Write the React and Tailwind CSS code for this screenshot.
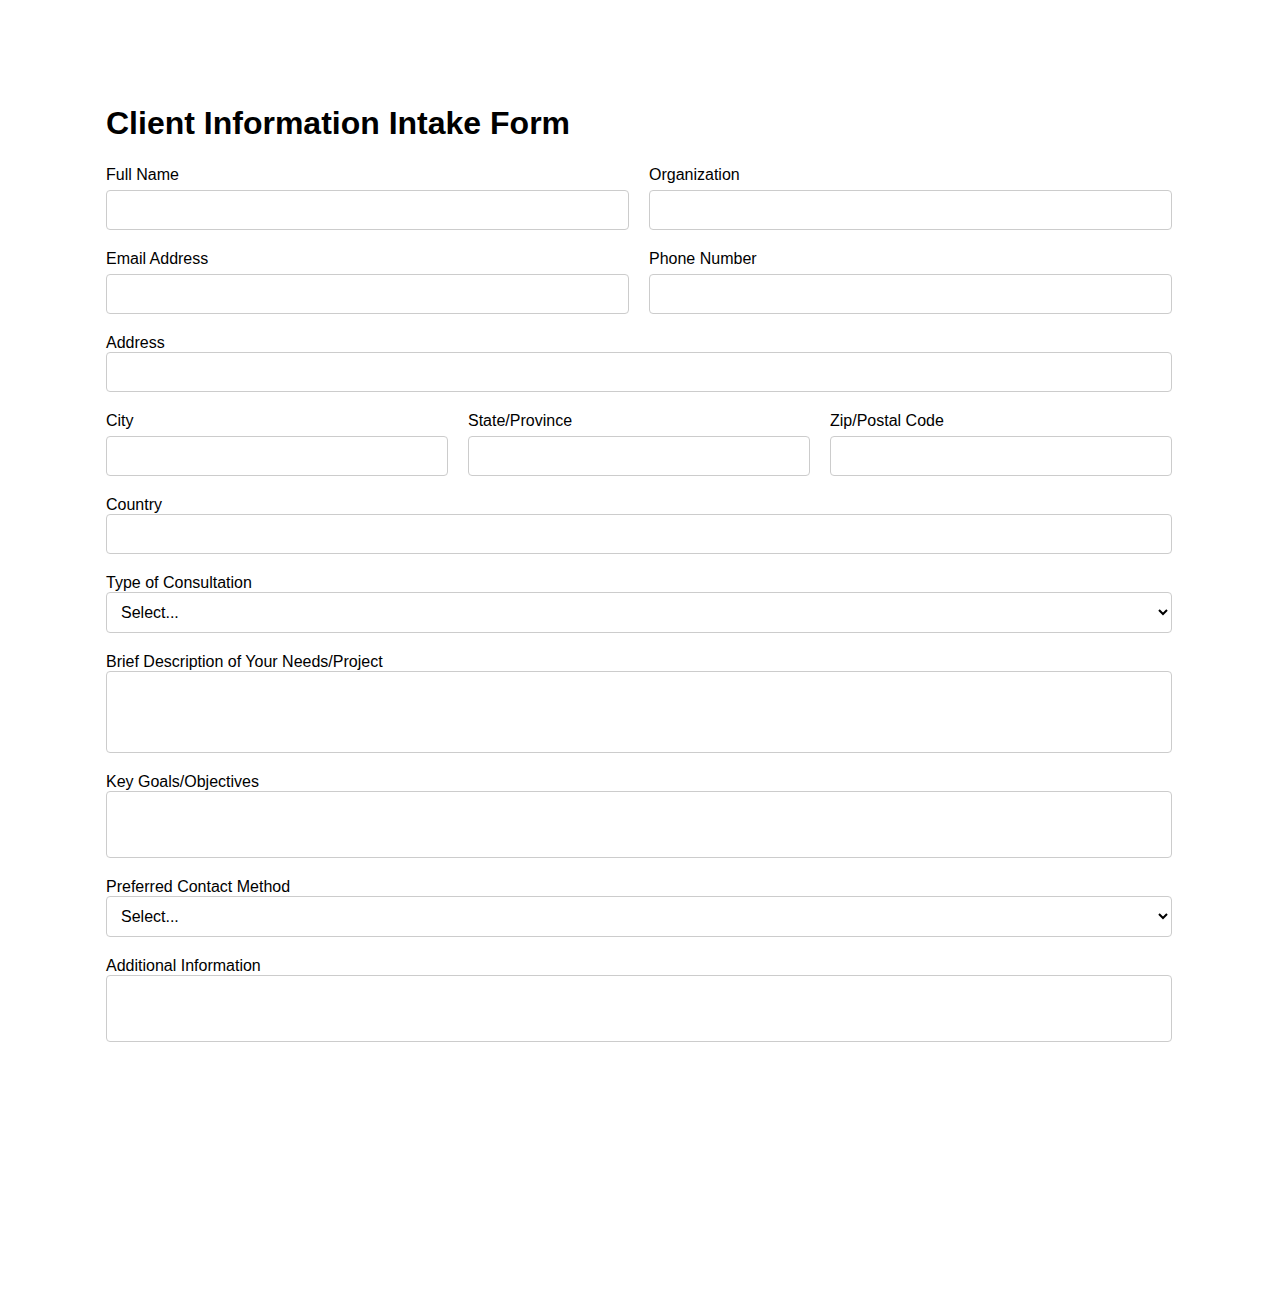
import React from "react";

const font = { fontFamily: '"Liberation Sans", Arial, sans-serif' };

const inputCls =
  "block w-full h-[40px] px-[10px] border border-[#cccccc] rounded-[4px] text-base bg-white outline-none";

const areaCls =
  "block w-full p-[10px] border border-[#cccccc] rounded-[4px] text-base resize-none outline-none";

function GridField({ label }) {
  return (
    <div>
      <label className="block text-base leading-[18px] mb-[6px] text-black">{label}</label>
      <input type="text" className={inputCls} />
    </div>
  );
}

function WideField({ label, children }) {
  return (
    <div className="mt-[20px]">
      <label className="block text-base leading-[18px] text-black">{label}</label>
      {children}
    </div>
  );
}

function SelectBox() {
  return (
    <select className="block w-full h-[41px] pl-[10px] pr-[4px] border border-[#cccccc] rounded-[4px] text-base bg-white text-black outline-none">
      <option>Select...</option>
    </select>
  );
}

export default function App() {
  return (
    <div className="min-h-[1300px] bg-white text-black" style={font}>
      <div className="w-[1066px] mx-auto pt-[105px]">
        <h1 className="text-[32px] leading-[37px] font-bold mb-[24px]">
          Client Information Intake Form
        </h1>
        <form>
          <div className="grid grid-cols-2 gap-x-[20px] gap-y-[20px]">
            <GridField label="Full Name" />
            <GridField label="Organization" />
            <GridField label="Email Address" />
            <GridField label="Phone Number" />
          </div>
          <WideField label="Address">
            <input type="text" className={inputCls} />
          </WideField>
          <div className="grid grid-cols-3 gap-x-[20px] mt-[20px]">
            <GridField label="City" />
            <GridField label="State/Province" />
            <GridField label="Zip/Postal Code" />
          </div>
          <WideField label="Country">
            <input type="text" className={inputCls} />
          </WideField>
          <WideField label="Type of Consultation">
            <SelectBox />
          </WideField>
          <WideField label="Brief Description of Your Needs/Project">
            <textarea className={`${areaCls} h-[82px]`} />
          </WideField>
          <WideField label="Key Goals/Objectives">
            <textarea className={`${areaCls} h-[67px]`} />
          </WideField>
          <WideField label="Preferred Contact Method">
            <SelectBox />
          </WideField>
          <WideField label="Additional Information">
            <textarea className={`${areaCls} h-[67px]`} />
          </WideField>
        </form>
      </div>
    </div>
  );
}
